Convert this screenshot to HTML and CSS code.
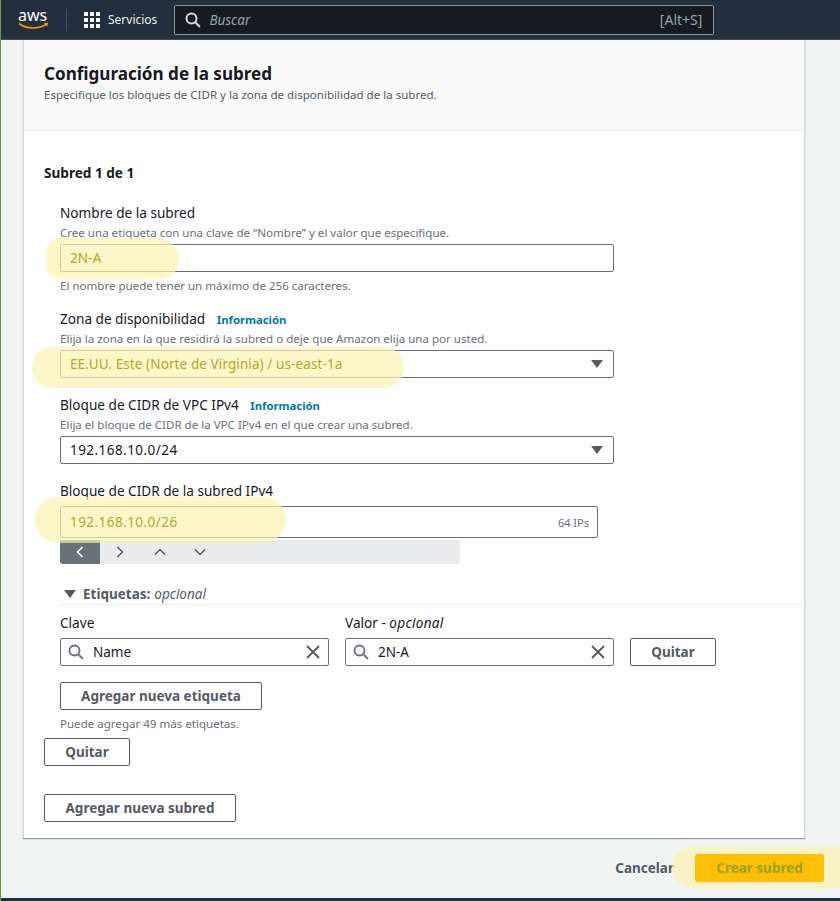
FILE: index.html
```html
<!DOCTYPE html>
<html lang="es">
<head>
<meta charset="UTF-8">
<meta name="viewport" content="width=device-width, initial-scale=1.0">
<title>Crear subred</title>
<link rel="stylesheet" href="styles.css">
</head>
<body>
<header class="topbar">
  <svg class="logo" width="34" height="32" viewBox="0 0 34 32">
    <text x="0" y="17" class="logo-text">aws</text>
    <path d="M1 19.500c4 3 9 4.500 14 4.500 4 0 9-1 14-4" fill="none" stroke="#ff9900" stroke-width="1.600"/>
    <path d="M26 19.200l4-.6-.8 3.800z" fill="#ff9900"/>
  </svg>
  <span class="topbar-sep"></span>
  <svg class="grid-icon" width="16" height="16" viewBox="0 0 16 16" fill="#fff">
    <rect width="4" height="4"/><rect x="6" width="4" height="4"/><rect x="12" width="4" height="4"/>
    <rect y="6" width="4" height="4"/><rect x="6" y="6" width="4" height="4"/><rect x="12" y="6" width="4" height="4"/>
    <rect y="12" width="4" height="4"/><rect x="6" y="12" width="4" height="4"/><rect x="12" y="12" width="4" height="4"/>
  </svg>
  <span class="services">Servicios</span>
  <div class="topsearch">
    <svg width="16" height="16" viewBox="0 0 16 16" fill="none" stroke="#d5dbdb" stroke-width="2"><circle cx="6.500" cy="6.500" r="5"/><path d="M10.500 10.500l4.500 4.500"/></svg>
    <span class="topsearch-text">Buscar</span>
    <span class="shortcut">[Alt+S]</span>
  </div>
</header>

<main class="page">
  <section class="card">
    <div class="card-head">
      <h1>Configuración de la subred</h1>
      <p>Especifique los bloques de CIDR y la zona de disponibilidad de la subred.</p>
    </div>
    <div class="card-body">
      <h2>Subred 1 de 1</h2>

      <div class="fields">
        <div class="field f-name">
          <label>Nombre de la subred</label>
          <div class="hint">Cree una etiqueta con una clave de “Nombre” y el valor que especifique.</div>
          <div class="input"><span class="marked">2N-A</span></div>
          <div class="hint hint-below">El nombre puede tener un máximo de 256 caracteres.</div>
        </div>

        <div class="field f-zone">
          <label>Zona de disponibilidad <a class="info">Información</a></label>
          <div class="hint">Elija la zona en la que residirá la subred o deje que Amazon elija una por usted.</div>
          <div class="input select"><span class="marked">EE.UU. Este (Norte de Virginia) / us-east-1a</span><i class="caret"></i></div>
        </div>

        <div class="field f-vpc">
          <label>Bloque de CIDR de VPC IPv4 <a class="info">Información</a></label>
          <div class="hint">Elija el bloque de CIDR de la VPC IPv4 en el que crear una subred.</div>
          <div class="input select input-num">192.168.10.0/24<i class="caret"></i></div>
        </div>

        <div class="field f-cidr">
          <label>Bloque de CIDR de la subred IPv4</label>
          <div class="input input-cidr input-num"><span class="marked">192.168.10.0/26</span><span class="ips">64 IPs</span></div>
          <div class="stepper">
            <span class="step step-on"><svg width="10" height="12" viewBox="0 0 10 12"><path d="M7.500 1L2.500 6l5 5"/></svg></span>
            <span class="step"><svg width="10" height="12" viewBox="0 0 10 12"><path d="M2.500 1l5 5-5 5"/></svg></span>
            <span class="step"><svg width="12" height="10" viewBox="0 0 12 10"><path d="M1 7.500l5-5 5 5"/></svg></span>
            <span class="step"><svg width="12" height="10" viewBox="0 0 12 10"><path d="M1 2.500l5 5 5-5"/></svg></span>
          </div>
        </div>

        <div class="tags">
          <div class="tags-head"><i class="caret caret-small"></i><b>Etiquetas:</b> <em>opcional</em></div>
          <div class="tag-row">
            <div class="tag-col">
              <label>Clave</label>
              <div class="input tag-input">
                <svg class="tag-search" width="16" height="16" viewBox="0 0 16 16"><circle cx="6.500" cy="6.500" r="5"/><path d="M10.500 10.500l4.500 4.500"/></svg>
                <span>Name</span>
                <svg class="tag-clear" width="16" height="16" viewBox="0 0 16 16"><path d="M2 2l12 12M14 2L2 14"/></svg>
              </div>
            </div>
            <div class="tag-col">
              <label>Valor - <em>opcional</em></label>
              <div class="input tag-input">
                <svg class="tag-search" width="16" height="16" viewBox="0 0 16 16"><circle cx="6.500" cy="6.500" r="5"/><path d="M10.500 10.500l4.500 4.500"/></svg>
                <span>2N-A</span>
                <svg class="tag-clear" width="16" height="16" viewBox="0 0 16 16"><path d="M2 2l12 12M14 2L2 14"/></svg>
              </div>
            </div>
            <button class="btn btn-quitar">Quitar</button>
          </div>
          <button class="btn btn-tag">Agregar nueva etiqueta</button>
          <div class="hint hint-count">Puede agregar 49 más etiquetas.</div>
        </div>
      </div>

      <button class="btn btn-quitar">Quitar</button>
      <button class="btn btn-subnet">Agregar nueva subred</button>
    </div>
  </section>

  <footer class="actions">
    <a class="cancel">Cancelar</a>
    <button class="primary">Crear subred</button>
  </footer>
</main>
<div class="bottombar"></div>

<!-- marcas de resaltador -->
<div class="mark mark-name"></div>
<div class="mark mark-zone"></div>
<div class="mark mark-cidr"></div>
<div class="mark mark-create"></div>
</body>
</html>
```

FILE: styles.css
```css
* {
  box-sizing: border-box;
}

body {
  margin: 0;
  height: 901px;
  overflow: hidden;
  position: relative;
  font-family: "Noto Sans", Arial, sans-serif;
  font-size: 13.500px;
  color: #16191f;
  background-color: #f2f3f3;
  border-left: 1px solid #6b9c45;
}

.topbar {
  height: 40px;
  display: flex;
  align-items: center;
  padding-left: 17px;
  background-color: #232f3e;
  border-bottom: 1px solid #414d5c;
}

.logo {
  margin-right: -2px;
}

.logo-text {
  font-family: "Noto Sans", Arial, sans-serif;
  font-size: 16px;
  fill: #fff;
}

.topbar-sep {
  width: 1px;
  height: 22px;
  margin: 0 17px 0 16px;
  background-color: #414d5c;
}

.services {
  margin-left: 8px;
  font-size: 12px;
  color: #eaeded;
}

.topsearch {
  width: 540px;
  height: 30px;
  margin-left: 17px;
  padding: 0 11px 0 10px;
  display: flex;
  align-items: center;
  background-color: #161b22;
  border: 1px solid #879596;
  border-radius: 2px;
}

.topsearch-text {
  margin-left: 8px;
  font-style: italic;
  font-size: 13.500px;
  color: #95a5a6;
}

.shortcut {
  margin-left: auto;
  font-size: 14px;
  color: #95a5a6;
}

.page {
  padding: 0 15px 0 22px;
}

.card {
  width: 782px;
  height: 798px;
  background-color: #fff;
  border-left: 1px solid #d5dbdb;
  border-right: 1px solid #d5dbdb;
  box-shadow: 0 1px 1px 0 rgba(0, 28, 36, 0.4);
}

.card-head {
  height: 91px;
  padding: 22px 20px 0;
  background-color: #fafafa;
  border-bottom: 1px solid #eaeded;
}

h1 {
  margin: 0;
  font-size: 17.100px;
  line-height: 24px;
  font-weight: 700;
}

.card-head p {
  margin: 1px 0 0;
  font-size: 11.550px;
  line-height: 16px;
  color: #545b64;
}

.card-body {
  padding: 33px 20px 0;
}

h2 {
  margin: 0;
  font-size: 13.600px;
  line-height: 18px;
  font-weight: 700;
}

.fields {
  padding: 0 16px;
  margin-top: 22px;
}

label {
  display: block;
  height: 18px;
  font-size: 13.600px;
  line-height: 18px;
}

label em {
  letter-spacing: 0.300px;
}

.info {
  margin-left: 8px;
  font-size: 11.300px;
  font-weight: 700;
  color: #0073bb;
}

.hint {
  height: 16px;
  font-size: 11.550px;
  line-height: 18px;
  color: #687078;
  margin-top: 2px;
}

.hint-below {
  margin-top: 5px;
}

.input {
  height: 28px;
  padding: 0 8px 0 9px;
  margin-top: 4px;
  display: flex;
  align-items: center;
  width: 554px;
  font-size: 13.500px;
  letter-spacing: 0.100px;
  background-color: #fff;
  border: 1px solid #687078;
  border-radius: 2px;
}

.input-num {
  letter-spacing: 0.450px;
}

/* texto bajo el resaltador */
.marked {
  position: relative;
  z-index: 2;
  color: #b3a62a;
}

.select {
  justify-content: space-between;
}

.caret {
  display: block;
  width: 0;
  height: 0;
  margin-right: 2px;
  border-left: 6px solid transparent;
  border-right: 6px solid transparent;
  border-top: 8px solid #545b64;
}

.f-zone {
  margin-top: 17px;
}

.f-vpc {
  margin-top: 18px;
}

.f-cidr {
  margin-top: 18px;
}

.input-cidr {
  width: 538px;
  height: 32px;
  margin-top: 6px;
  justify-content: space-between;
}

.ips {
  font-size: 11px;
  letter-spacing: 0;
  color: #687078;
}

.stepper {
  width: 400px;
  height: 24px;
  margin-top: 2px;
  display: flex;
  background-color: #e9ebed;
  border-radius: 0 0 3px 3px;
}

.step {
  width: 40px;
  display: flex;
  align-items: center;
  justify-content: center;
}

.step svg {
  fill: none;
  stroke: #545b64;
  stroke-width: 1.500;
}

.step-on {
  background-color: #687078;
  border-radius: 0 0 0 3px;
}

.step-on svg {
  stroke: #fff;
}

.tags {
  margin-top: 19px;
}

.tags-head {
  height: 22px;
  display: flex;
  align-items: center;
  gap: 4px;
  padding-left: 4px;
  margin-right: -36px;
  font-size: 13.500px;
  color: #545b64;
  border-bottom: 1px solid #eaeded;
  margin-bottom: 9px;
}

.tags-head b {
  font-weight: 700;
}

.caret-small {
  margin-right: 3px;
  border-left-width: 6px;
  border-right-width: 6px;
  border-top-width: 8px;
}

.tag-row {
  display: flex;
  align-items: flex-end;
}

.tag-col {
  width: 269px;
  margin-right: 16px;
}

.tag-input {
  width: 269px;
  margin-top: 6px;
  padding: 0 7px;
  letter-spacing: 0;
}

.tag-search {
  fill: none;
  stroke: #687078;
  stroke-width: 1.800;
}

.tag-input span {
  margin-left: 9px;
}

.tag-clear {
  margin-left: auto;
  fill: none;
  stroke: #545b64;
  stroke-width: 1.800;
}

.btn {
  display: block;
  height: 28px;
  padding: 0;
  font-family: inherit;
  font-size: 13.500px;
  font-weight: 700;
  color: #545b64;
  background-color: #fff;
  border: 1px solid #545b64;
  border-radius: 2px;
}

.btn-quitar {
  width: 86px;
}

.btn-tag {
  width: 202px;
  margin-top: 16px;
}

.hint-count {
  margin-top: 5px;
  margin-bottom: 7px;
}

.btn-subnet {
  width: 192px;
  margin-top: 28px;
}

.actions {
  height: 44px;
  padding-top: 16px;
  display: flex;
  justify-content: flex-end;
  align-items: center;
  gap: 21px;
  width: 801px;
}

.cancel {
  font-weight: 700;
  font-size: 13.500px;
  color: #545b64;
}

.primary {
  position: relative;
  z-index: 2;
  width: 129px;
  height: 28px;
  padding: 0;
  font-family: inherit;
  font-size: 13.500px;
  font-weight: 700;
  color: #9ba31e;
  background-color: #fdc006;
  border: none;
  border-radius: 2px;
}

.bottombar {
  position: absolute;
  left: -1px;
  right: 0;
  top: 898px;
  height: 3px;
  background-color: #232f3e;
}

.mark {
  position: absolute;
  background-color: rgba(250, 242, 175, 0.69);
}

.mark-name {
  left: 45px;
  top: 238px;
  width: 133px;
  height: 41px;
  border-radius: 20px 28px 24px 18px;
}

.mark-zone {
  left: 31px;
  top: 347px;
  width: 372px;
  height: 41px;
  border-radius: 20px;
}

.mark-cidr {
  left: 34px;
  top: 497px;
  width: 251px;
  height: 46px;
  border-radius: 23px;
}

.mark-create {
  left: 671px;
  top: 847px;
  width: 169px;
  height: 41px;
  border-radius: 22px 0 0 22px;
}
```
